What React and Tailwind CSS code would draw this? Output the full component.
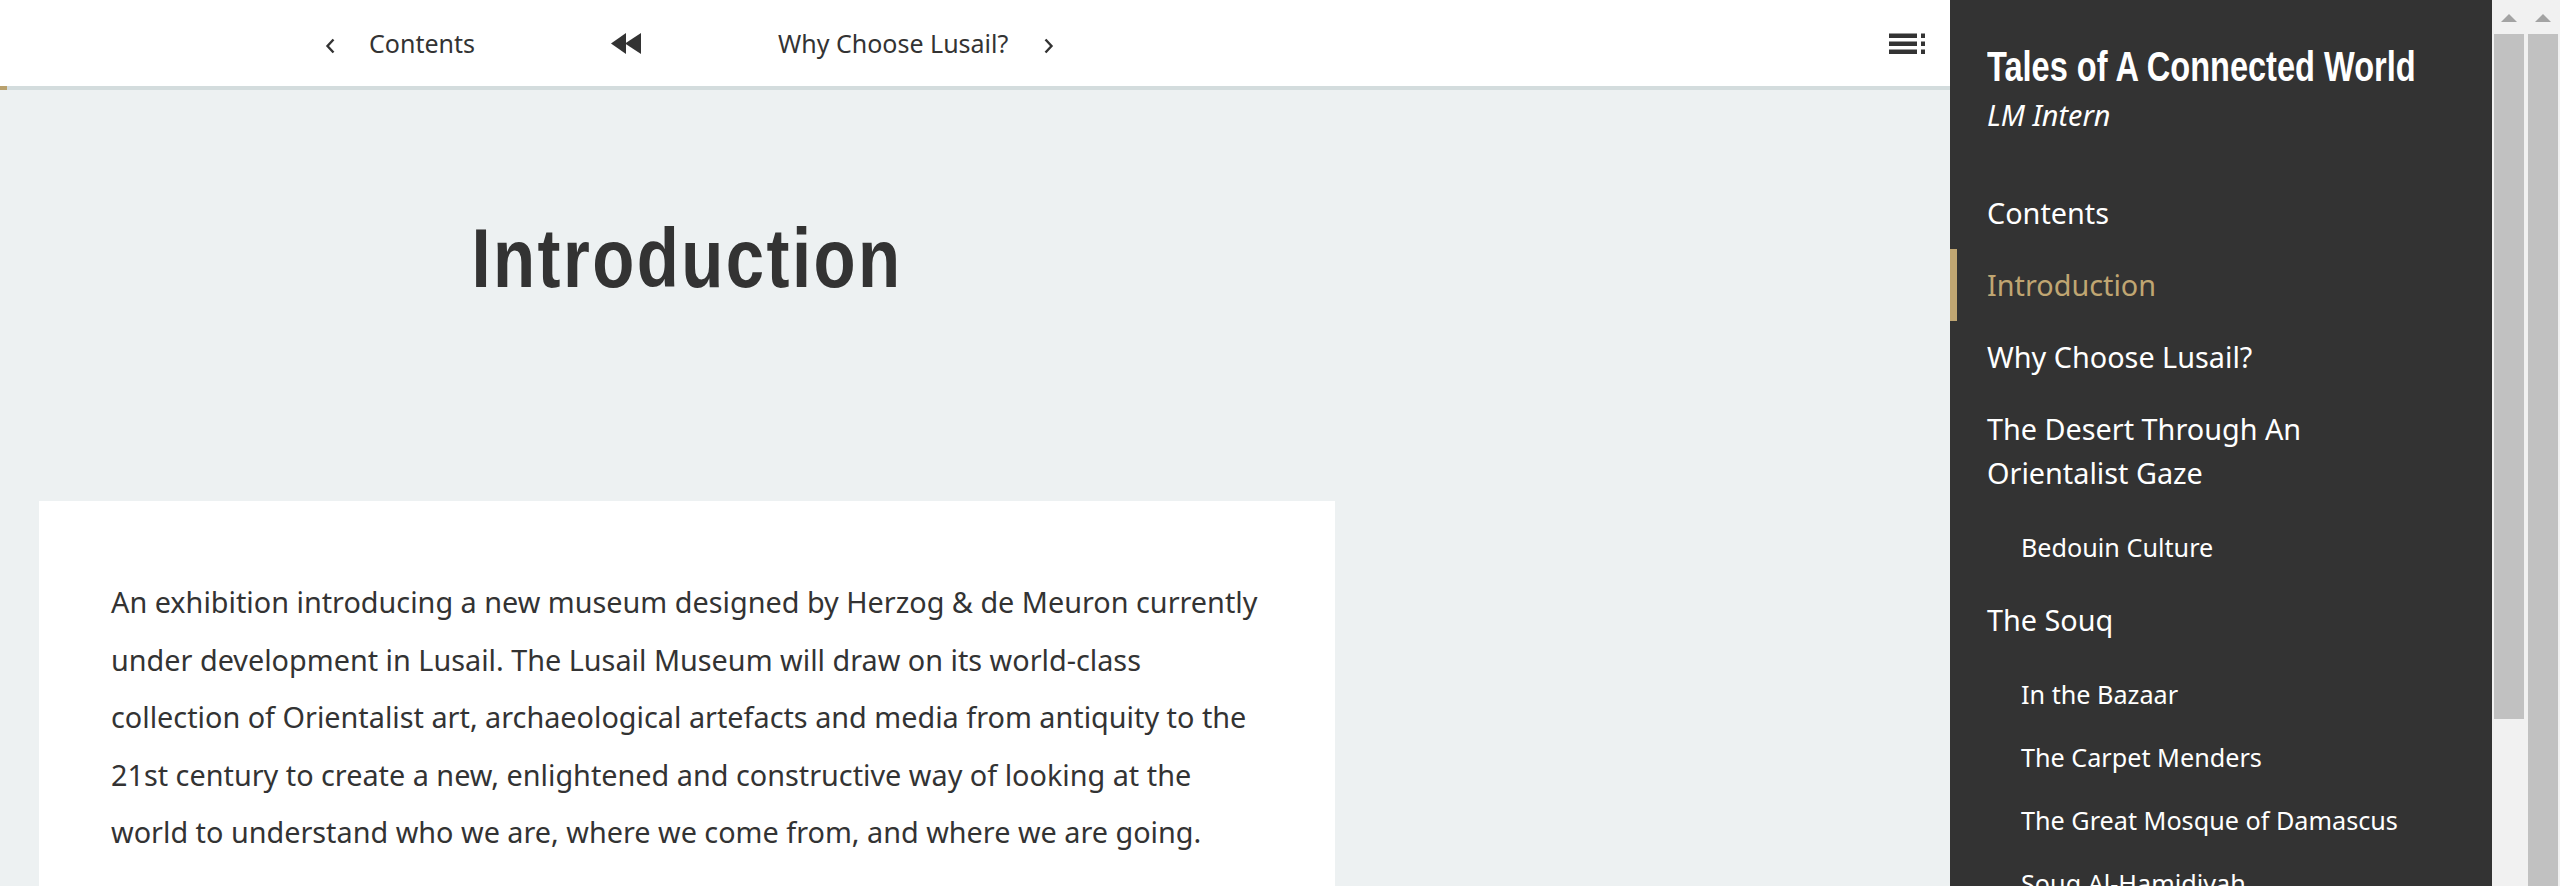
import React from "react";

const NAV = [
  { label: "Contents" },
  { label: "Introduction", active: true },
  { label: "Why Choose Lusail?" },
  { label: "The Desert Through An Orientalist Gaze", children: ["Bedouin Culture"] },
  {
    label: "The Souq",
    children: ["In the Bazaar", "The Carpet Menders", "The Great Mosque of Damascus", "Souq Al-Hamidiyah"],
  },
];

function ChevronLeft() {
  return (
    <svg width="11" height="16" viewBox="0 0 11 16" className="mt-[5px]">
      <polyline points="8.5,1.5 2.5,8 8.5,14.5" fill="none" stroke="#333" strokeWidth="2.4" />
    </svg>
  );
}

function ChevronRight() {
  return (
    <svg width="11" height="16" viewBox="0 0 11 16" className="mt-[5px]">
      <polyline points="2.5,1.5 8.5,8 2.5,14.5" fill="none" stroke="#333" strokeWidth="2.4" />
    </svg>
  );
}

function Rewind() {
  return (
    <svg width="30" height="21" viewBox="0 0 30 21">
      <polygon points="0,10.5 15,0 15,21" fill="#333" />
      <polygon points="14,10.5 30,0 30,21" fill="#333" />
    </svg>
  );
}

function MenuIcon() {
  return (
    <svg width="36" height="21" viewBox="0 0 36 21">
      <rect x="0" y="0.5" width="28" height="4.5" fill="#333" />
      <rect x="32" y="0.5" width="4" height="4.5" fill="#333" />
      <rect x="0" y="8.5" width="28" height="4.5" fill="#333" />
      <rect x="32" y="8.5" width="4" height="4.5" fill="#333" />
      <rect x="0" y="16.5" width="28" height="4.5" fill="#333" />
      <rect x="32" y="16.5" width="4" height="4.5" fill="#333" />
    </svg>
  );
}

function ScrollBar({ long }) {
  return (
    <div className="flex w-[34px] flex-col bg-[#f1f1f1]">
      <div className="flex h-[34px] justify-center pt-[14px]">
        <svg width="16" height="8" viewBox="0 0 16 8">
          <polygon points="8,0 16,8 0,8" fill="#a3a3a3" />
        </svg>
      </div>
      {long ? (
        <div className="mx-[2px] flex-1 bg-[#c1c1c1]" />
      ) : (
        <div className="mx-[2px] h-[685px] bg-[#c1c1c1]" />
      )}
    </div>
  );
}

function TopBar() {
  return (
    <div className="flex flex-col">
      <div className="flex h-[86px] items-center bg-white pl-[325px] pr-[25px] font-['Noto_Sans',sans-serif] text-[25px] leading-[34px] text-[#333]">
        <div className="w-[44px]">
          <ChevronLeft />
        </div>
        <span className="w-[242px]">Contents</span>
        <div className="flex w-[167px]">
          <Rewind />
        </div>
        <span className="w-[265px]">Why Choose Lusail?</span>
        <ChevronRight />
        <div className="ml-auto flex">
          <MenuIcon />
        </div>
      </div>
      <div className="flex h-[4px] bg-[#d3dcdd]">
        <div className="w-[7px] bg-[#b9a16e]" />
      </div>
    </div>
  );
}

function Sidebar() {
  return (
    <aside className="flex w-[542px] flex-col overflow-hidden bg-[#333] pt-[46px] font-['Noto_Sans',sans-serif] text-white">
      <div className="pl-[37px] pr-[40px]">
        {/* condensed display face isn't available, so narrow the bold sans */}
        <h1 className="origin-left scale-x-[0.775] whitespace-nowrap font-['Liberation_Sans',sans-serif] text-[42px] font-bold leading-none">
          Tales of A Connected World
        </h1>
        <p className="mt-[7px] text-[28.8px] italic leading-[40px]">LM Intern</p>
      </div>
      <ul className="mt-[42px]">
        {NAV.map((item) => (
          <li key={item.label}>
            <div
              className={
                item.active
                  ? "border-l-[7px] border-[#c0a672] py-[14px] pl-[30px] pr-[60px] text-[28.8px] leading-[44px] text-[#c0a672]"
                  : "border-l-[7px] border-transparent py-[14px] pl-[30px] pr-[60px] text-[28.8px] leading-[44px]"
              }
            >
              {item.label}
            </div>
            {item.children && (
              <ul className="py-[6px]">
                {item.children.map((c) => (
                  <li key={c} className="py-[9.5px] pl-[71px] pr-[40px] text-[25.2px] leading-[44px]">
                    {c}
                  </li>
                ))}
              </ul>
            )}
          </li>
        ))}
      </ul>
    </aside>
  );
}

export default function App() {
  return (
    <div className="flex h-[886px] w-[2560px] overflow-hidden">
      <main className="flex flex-1 flex-col bg-[#edf1f2]">
        <TopBar />
        <div className="ml-[39px] flex w-[1296px] flex-col pt-[126px]">
          <h2 className="scale-x-[0.82] text-center font-['Liberation_Sans',sans-serif] text-[84px] font-bold leading-none tracking-[3px] text-[#333]">
            Introduction
          </h2>
          <section className="mt-[201px] bg-white p-[72px] font-['Noto_Sans',sans-serif] text-[28.8px] leading-[57.6px] text-[#333]">
            <p>
              An exhibition introducing a new museum designed by Herzog &amp; de Meuron currently
              <br />
              under development in Lusail. The Lusail Museum will draw on its world-class
              <br />
              collection of Orientalist art, archaeological artefacts and media from antiquity to the
              <br />
              21st century to create a new, enlightened and constructive way of looking at the
              <br />
              world to understand who we are, where we come from, and where we are going.
            </p>
          </section>
        </div>
      </main>
      <Sidebar />
      <ScrollBar />
      <ScrollBar long />
    </div>
  );
}
